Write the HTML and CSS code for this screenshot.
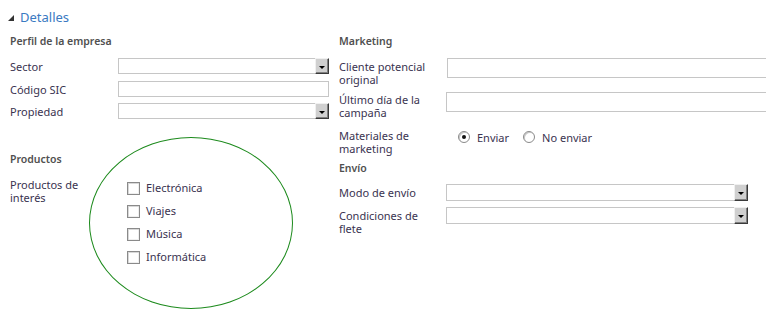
FILE: index.html
```html
<!DOCTYPE html>
<html lang="es">
<head>
<meta charset="utf-8">
<title>Detalles</title>
<link rel="stylesheet" href="styles.css">
</head>
<body>
<div class="page">
  <div class="section-title"><span class="tri"></span>Detalles</div>
  <div class="cols">
    <div class="col col-left">
      <div class="group-head">Perfil de la empresa</div>
      <div class="row r-sector">
        <div class="label">Sector</div>
        <div class="field select"><span class="btn"><span class="arrow"></span></span></div>
      </div>
      <div class="row r-sic">
        <div class="label">Código SIC</div>
        <div class="field text"></div>
      </div>
      <div class="row r-prop">
        <div class="label">Propiedad</div>
        <div class="field select"><span class="btn"><span class="arrow"></span></span></div>
      </div>
      <div class="group-head gh-prod">Productos</div>
      <div class="row r-prod">
        <div class="label"><span class="ln">Productos de</span><span class="ln">interés</span></div>
        <div class="checks">
          <label class="check"><span class="cb"></span>Electrónica</label>
          <label class="check"><span class="cb"></span>Viajes</label>
          <label class="check"><span class="cb"></span>Música</label>
          <label class="check"><span class="cb"></span>Informática</label>
        </div>
      </div>
    </div>
    <div class="col col-right">
      <div class="group-head">Marketing</div>
      <div class="row r-cliente">
        <div class="label"><span class="ln">Cliente potencial</span><span class="ln">original</span></div>
        <div class="field text tall wide"></div>
      </div>
      <div class="row r-ultimo">
        <div class="label"><span class="ln">Último día de la</span><span class="ln">campaña</span></div>
        <div class="field text tall wide shift"></div>
      </div>
      <div class="row r-mat">
        <div class="label"><span class="ln">Materiales de</span><span class="ln">marketing</span></div>
        <div class="radios">
          <label class="radio"><span class="rb on"></span>Enviar</label>
          <label class="radio"><span class="rb"></span>No enviar</label>
        </div>
      </div>
      <div class="group-head gh-envio">Envío</div>
      <div class="row r-modo">
        <div class="label">Modo de envío</div>
        <div class="field select shift"><span class="btn"><span class="arrow"></span></span></div>
      </div>
      <div class="row r-cond">
        <div class="label"><span class="ln">Condiciones de</span><span class="ln">flete</span></div>
        <div class="field select shift"><span class="btn"><span class="arrow"></span></span></div>
      </div>
    </div>
  </div>
  <div class="annotation"></div>
</div>
</body>
</html>
```

FILE: styles.css
```css
html, body {
  margin: 0;
  padding: 0;
  background: #ffffff;
  overflow: hidden;
}
body {
  width: 766px;
  height: 326px;
  font-family: "Noto Sans", "Open Sans", sans-serif;
  font-size: 11px;
  color: #3a3350;
}
.page {
  position: relative;
  width: 766px;
  height: 326px;
}
.section-title {
  display: flex;
  align-items: center;
  padding: 8px 0 0 8px;
  height: 18px;
  font-size: 13px;
  color: #3a7ac2;
  line-height: 18px;
}
.tri {
  width: 0;
  height: 0;
  border-left: 6px solid transparent;
  border-bottom: 6px solid #333;
  margin-right: 6px;
  margin-top: 1px;
}
.cols {
  display: flex;
  padding-left: 10px;
}
.col-left {
  width: 319px;
  flex: none;
}
.col-right {
  margin-left: 10px;
  flex: none;
  width: 430px;
}
.group-head {
  font-weight: 600;
  color: #505050;
  font-size: 10.5px;
  line-height: 14px;
  height: 14px;
}
.col-left > .group-head:first-child,
.col-right > .group-head:first-child {
  margin-top: 8px;
}
.row {
  display: flex;
  align-items: flex-start;
  flex: none;
}
.label {
  width: 108px;
  flex: none;
  line-height: 13px;
}
.ln {
  display: block;
  height: 13px;
  white-space: nowrap;
}
.field {
  position: relative;
  box-sizing: border-box;
  border: 1px solid #c6c6c6;
  background: #fff;
  height: 16px;
  width: 211px;
}
.field.tall { height: 20px; }
.field.wide { width: 330px; }
.field.shift { margin-left: -1px; }
.col-right .field.select { width: 302px; height: 17px; }
.btn {
  position: absolute;
  right: -1px;
  top: -1px;
  width: 14px;
  height: 16px;
  box-sizing: border-box;
  background: #d0d0d0;
  border-top: 1px solid #f0f0f0;
  border-left: 1px solid #f0f0f0;
  border-right: 1px solid #3a3a3a;
  border-bottom: 1px solid #3a3a3a;
  box-shadow: inset -1px -1px 0 #808080;
  display: flex;
  align-items: center;
  justify-content: center;
}
.col-right .btn { height: 17px; }
.arrow {
  width: 0;
  height: 0;
  border-left: 3px solid transparent;
  border-right: 3px solid transparent;
  border-top: 3px solid #000;
  margin-top: 2px;
  margin-right: 1px;
}

/* left column rows */
.r-sector { margin-top: 10px; height: 23px; }
.r-sic { height: 22px; }
.r-prop { height: 16px; }
.r-sector .label, .r-sic .label, .r-prop .label { padding-top: 2px; }
.gh-prod { margin-top: 33px; }
.r-prod { margin-top: 12px; }
.checks {
  display: flex;
  flex-direction: column;
  gap: 9px;
  margin-left: 9px;
  margin-top: 3px;
}
.check {
  display: flex;
  align-items: center;
  height: 14px;
  line-height: 14px;
}
.cb {
  width: 13px;
  height: 13px;
  box-sizing: border-box;
  border: 1px solid #8a8a8a;
  box-shadow: inset 1px 1px 0 #d8d8d8, inset -1px -1px 0 #efefef;
  background: #fff;
  margin-right: 6px;
}

/* right column rows */
.r-cliente { margin-top: 10px; height: 34px; }
.r-cliente .label { padding-top: 2px; }
.r-ultimo { height: 37px; }
.r-ultimo .label { padding-top: 1px; }
.r-mat { height: 32px; }
.radios {
  display: flex;
  gap: 14px;
  margin-left: 11px;
  margin-top: 1px;
}
.radio {
  display: flex;
  align-items: center;
  height: 14px;
}
.rb {
  position: relative;
  width: 12px;
  height: 12px;
  box-sizing: border-box;
  border-radius: 50%;
  border: 1px solid #8a8a8a;
  box-shadow: inset 1px 1px 0 #c8c8c8;
  background: #fff;
  margin-right: 7px;
}
.rb.on::after {
  content: "";
  position: absolute;
  left: 3px;
  top: 3px;
  width: 4px;
  height: 4px;
  border-radius: 50%;
  background: #111;
}
.gh-envio { margin-top: 0; }
.r-modo { margin-top: 9px; height: 23px; }
.r-modo .label { padding-top: 2px; }
.r-cond { height: 30px; }
.r-cond .label { padding-top: 2px; }
.annotation {
  position: absolute;
  left: 89px;
  top: 137px;
  width: 204px;
  height: 172px;
  box-sizing: border-box;
  border: 1px solid #1c8a1c;
  border-radius: 50%;
}
```
